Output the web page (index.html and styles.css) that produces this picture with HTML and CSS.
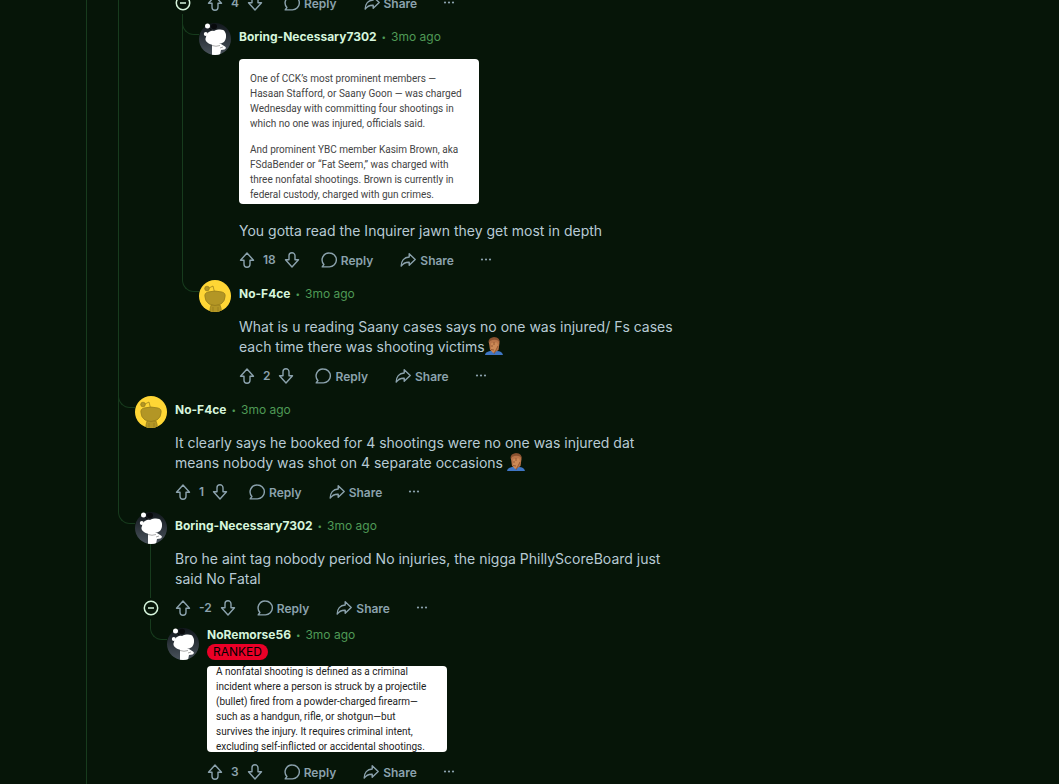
FILE: index.html
```html
<!DOCTYPE html>
<html lang="en">
<head>
<meta charset="UTF-8">
<meta name="viewport" content="width=device-width, initial-scale=1.0">
<title>Comments</title>
<link rel="stylesheet" href="styles.css">
</head>
<body>
<svg class="sprite" aria-hidden="true">
<defs>
<linearGradient id="night" x1="0" y1="0" x2="0" y2="1">
<stop offset="0" stop-color="#11171c"/>
<stop offset="1" stop-color="#4a535c"/>
</linearGradient>
<clipPath id="round"><circle cx="16" cy="16" r="16"/></clipPath>
</defs>
<symbol id="up" viewBox="0 0 16 16">
<path d="M8 1 14.500 8.200H11V12.200a3 3 0 0 1-6 0V8.200H1.500Z" fill="none" stroke="currentColor" stroke-width="1.4" stroke-linejoin="round"/>
</symbol>
<symbol id="down" viewBox="0 0 16 16">
<path d="M8 15 14.500 7.800H11V3.800a3 3 0 0 0-6 0V7.800H1.500Z" fill="none" stroke="currentColor" stroke-width="1.4" stroke-linejoin="round"/>
</symbol>
<symbol id="bubble" viewBox="0 0 16 16">
<path d="M8.400 1a6.900 6.900 0 0 1 0 13.900H1.200l1.700-2.400A6.900 6.900 0 0 1 8.400 1Z" fill="none" stroke="currentColor" stroke-width="1.4" stroke-linejoin="round"/>
</symbol>
<symbol id="share" viewBox="0 0 16 16">
<path d="M9.200 1.800 15.200 7.600 9.200 13.200V10.200C5.500 10 3 11.400 1.200 14.100 1.200 8.800 4.200 5.200 9.200 5Z" fill="none" stroke="currentColor" stroke-width="1.4" stroke-linejoin="round"/>
</symbol>
<symbol id="dots" viewBox="0 0 16 16">
<g fill="currentColor"><circle cx="4" cy="7.500" r="1.100"/><circle cx="8" cy="7.500" r="1.100"/><circle cx="12" cy="7.500" r="1.100"/></g>
</symbol>
<symbol id="collapse" viewBox="0 0 16 16">
<circle cx="8" cy="8" r="6.700" fill="none" stroke="currentColor" stroke-width="1.5"/>
<path d="M5 8h6" stroke="currentColor" stroke-width="1.5"/>
</symbol>
<symbol id="snoo-dark" viewBox="0 0 32 32">
<g clip-path="url(#round)">
<rect width="32" height="32" fill="url(#night)"/>
<path d="M9 4Q12 6 13 8" fill="none" stroke="#050505" stroke-width="1"/>
<ellipse cx="15" cy="3.500" rx="3" ry="2.800" fill="#080a0c"/>
<circle cx="6.800" cy="11" r="2" fill="#fff"/>
<path d="M7 14C8 9 12 7 15 8 19 6 25 6 26 9 28 12 27 17 25 19 20 22 12 23 9 20 6 18 6 16 7 14Z" fill="#fff"/>
<path d="M13 21h9l4 2.500q2 1.500-.5 3L22 27l-1 5h-8Z" fill="#fff"/>
<path d="M13 22.500q4 1.500 8 0M21 25l3-1" fill="none" stroke="#aaa" stroke-width="1"/>
</g>
<circle cx="8.500" cy="3" r="2.500" fill="#fff"/>
</symbol>
<symbol id="snoo-gold" viewBox="0 0 32 32">
<g clip-path="url(#round)">
<rect width="32" height="32" fill="#ffd635"/>
<g fill="#b39625" stroke="#927a1b" stroke-width=".7">
<path d="M15.500 12 14 6 10 8" fill="none"/>
<circle cx="8" cy="8.500" r="2.300"/>
<path d="M12 25h9q1.500 3 1.500 8h-12Q11 28 12 25Z"/>
<path d="M14 27v5M19 27v5" fill="none"/>
<path d="M6 17Q5 13 9 12 16 10 23 12 27 13 26 17 26 21 22 24 16 27 10 24 6 21 6 17Z"/>
</g>
</g>
</symbol>
<symbol id="facepalm" viewBox="0 0 18 18">
<path d="M0 18Q0 15 5 14h7q5 0 6 4Z" fill="#3f76c4"/>
<path d="M4 6Q4 1 9 .5 14 1 14.500 6L13.500 13 9 16 5 13Z" fill="#b97549"/>
<path d="M3.500 6Q3 .5 9 .2 15 0 14.800 6L13 3.500Q9 2 5 4Z" fill="#8a5230"/>
<path d="M6 6.500 8 5.500 12 5.500 13 8 11 13 8 16 6 13Z" fill="#cc8956"/>
<path d="M6 9h2M9 5v3M6 12.500l3 .5M13 9l-2 4-2 4" fill="none" stroke="#8a4f2c" stroke-width=".8"/>
</symbol>
</svg>

<main class="thread">
<ul class="replies">
<li class="reply">
<div class="branch"></div>
<ul class="replies">
<li class="reply">
<div class="branch last"></div>
<div>
<article class="comment">
<div class="side">
<button class="toggle" type="button" aria-label="Collapse"><svg><use href="#collapse"/></svg></button>
<span class="line"></span>
</div>
<div class="content">
<div class="actions">
<button type="button" aria-label="Upvote"><svg><use href="#up"/></svg></button>
<span class="count">4</span>
<button type="button" aria-label="Downvote"><svg><use href="#down"/></svg></button>
<button class="action reply-btn" type="button"><svg><use href="#bubble"/></svg>Reply</button>
<button class="action" type="button"><svg><use href="#share"/></svg>Share</button>
<button class="more" type="button" aria-label="More"><svg><use href="#dots"/></svg></button>
</div>
</div>
</article>
<ul class="replies">
<li class="reply">
<div class="branch"><span class="elbow"></span></div>
<article class="comment">
<div class="side"><svg class="avatar"><use href="#snoo-dark"/></svg></div>
<div class="content">
<header class="meta"><a class="author" href="#">Boring-Necessary7302</a><span class="dot">•</span><time>3mo ago</time></header>
<div class="media article-shot">
<p>One of CCK’s most prominent members —<br>Hasaan Stafford, or Saany Goon — was charged<br>Wednesday with committing four shootings in<br>which no one was injured, officials said.</p>
<p>And prominent YBC member Kasim Brown, aka<br>FSdaBender or “Fat Seem,” was charged with<br>three nonfatal shootings. Brown is currently in<br>federal custody, charged with gun crimes.</p>
</div>
<p class="text after-media">You gotta read the Inquirer jawn they get most in depth</p>
<div class="actions">
<button type="button" aria-label="Upvote"><svg><use href="#up"/></svg></button>
<span class="count">18</span>
<button type="button" aria-label="Downvote"><svg><use href="#down"/></svg></button>
<button class="action reply-btn" type="button"><svg><use href="#bubble"/></svg>Reply</button>
<button class="action" type="button"><svg><use href="#share"/></svg>Share</button>
<button class="more" type="button" aria-label="More"><svg><use href="#dots"/></svg></button>
</div>
</div>
</article>
</li>
<li class="reply">
<div class="branch last"><span class="elbow"></span></div>
<article class="comment">
<div class="side"><svg class="avatar"><use href="#snoo-gold"/></svg></div>
<div class="content">
<header class="meta"><a class="author" href="#">No-F4ce</a><span class="dot">•</span><time>3mo ago</time></header>
<p class="text">What is u reading Saany cases says no one was injured/ Fs cases each time there was shooting victims<svg class="emoji"><use href="#facepalm"/></svg></p>
<div class="actions">
<button type="button" aria-label="Upvote"><svg><use href="#up"/></svg></button>
<span class="count">2</span>
<button type="button" aria-label="Downvote"><svg><use href="#down"/></svg></button>
<button class="action reply-btn" type="button"><svg><use href="#bubble"/></svg>Reply</button>
<button class="action" type="button"><svg><use href="#share"/></svg>Share</button>
<button class="more" type="button" aria-label="More"><svg><use href="#dots"/></svg></button>
</div>
</div>
</article>
</li>
</ul>
</div>
</li>
</ul>
</li>
<li class="reply">
<div class="branch"><span class="elbow"></span></div>
<article class="comment">
<div class="side"><svg class="avatar"><use href="#snoo-gold"/></svg></div>
<div class="content">
<header class="meta"><a class="author" href="#">No-F4ce</a><span class="dot">•</span><time>3mo ago</time></header>
<p class="text">It clearly says he booked for 4 shootings were no one was injured dat means nobody was shot on 4 separate occasions <svg class="emoji"><use href="#facepalm"/></svg></p>
<div class="actions">
<button type="button" aria-label="Upvote"><svg><use href="#up"/></svg></button>
<span class="count">1</span>
<button type="button" aria-label="Downvote"><svg><use href="#down"/></svg></button>
<button class="action reply-btn" type="button"><svg><use href="#bubble"/></svg>Reply</button>
<button class="action" type="button"><svg><use href="#share"/></svg>Share</button>
<button class="more" type="button" aria-label="More"><svg><use href="#dots"/></svg></button>
</div>
</div>
</article>
</li>
<li class="reply">
<div class="branch last"><span class="elbow"></span></div>
<div>
<article class="comment">
<div class="side">
<svg class="avatar"><use href="#snoo-dark"/></svg>
<span class="line grow"></span>
<button class="toggle" type="button" aria-label="Collapse"><svg><use href="#collapse"/></svg></button>
<span class="line"></span>
</div>
<div class="content">
<header class="meta"><a class="author" href="#">Boring-Necessary7302</a><span class="dot">•</span><time>3mo ago</time></header>
<p class="text">Bro he aint tag nobody period No injuries, the nigga PhillyScoreBoard just said No Fatal</p>
<div class="actions">
<button type="button" aria-label="Upvote"><svg><use href="#up"/></svg></button>
<span class="count">-2</span>
<button type="button" aria-label="Downvote"><svg><use href="#down"/></svg></button>
<button class="action reply-btn" type="button"><svg><use href="#bubble"/></svg>Reply</button>
<button class="action" type="button"><svg><use href="#share"/></svg>Share</button>
<button class="more" type="button" aria-label="More"><svg><use href="#dots"/></svg></button>
</div>
</div>
</article>
<ul class="replies">
<li class="reply">
<div class="branch last"><span class="elbow"></span></div>
<article class="comment">
<div class="side"><svg class="avatar"><use href="#snoo-dark"/></svg></div>
<div class="content">
<header class="meta has-flair"><a class="author" href="#">NoRemorse56</a><span class="dot">•</span><time>3mo ago</time></header>
<span class="flair">RANKED</span>
<div class="media search-shot">
<p>A nonfatal shooting is defined as a criminal<br>incident where a person is struck by a projectile<br>(bullet) fired from a powder-charged firearm—<br>such as a handgun, rifle, or shotgun—but<br>survives the injury. It requires criminal intent,<br>excluding self-inflicted or accidental shootings.</p>
</div>
<div class="actions">
<button type="button" aria-label="Upvote"><svg><use href="#up"/></svg></button>
<span class="count">3</span>
<button type="button" aria-label="Downvote"><svg><use href="#down"/></svg></button>
<button class="action reply-btn" type="button"><svg><use href="#bubble"/></svg>Reply</button>
<button class="action" type="button"><svg><use href="#share"/></svg>Share</button>
<button class="more" type="button" aria-label="More"><svg><use href="#dots"/></svg></button>
</div>
</div>
</article>
</li>
</ul>
</div>
</li>
</ul>
</main>
</body>
</html>
```
FILE: styles.css
```css
* {
box-sizing: border-box;
}
html {
height: 100%;
overflow: hidden;
background-color: #061508;
}
body {
margin: 0;
height: 100%;
overflow: hidden;
background-color: #061508;
color: #b7cad4;
font-family: Inter, "Liberation Sans", sans-serif;
font-size: 14px;
line-height: 20px;
}
p, ul {
margin: 0;
padding: 0;
}
ul {
list-style: none;
}
.sprite {
display: block;
width: 0;
height: 0;
}
.thread {
max-width: 594px;
margin: -13px 0 0 86px;
padding-left: 16px;
border-left: 1px solid #173b1d;
min-height: calc(100% + 13px);
}

/* nesting lines */
.replies {
margin-left: 15px;
}
.reply {
display: grid;
grid-template-columns: 17px minmax(0, 1fr);
}
.branch {
border-left: 1px solid #173b1d;
}
.branch.last {
border-left-color: transparent;
}
.elbow {
display: block;
height: 12px;
margin-left: -1px;
border: solid #173b1d;
border-width: 0 0 1px 1px;
border-bottom-left-radius: 12px;
}
.line {
width: 1px;
height: 9px;
margin-right: 1px;
background-color: #173b1d;
}
.line.grow {
flex: 1;
}

.comment {
display: grid;
grid-template-columns: 32px minmax(0, 1fr);
column-gap: 8px;
}
.side {
display: flex;
flex-direction: column;
align-items: center;
justify-content: flex-end;
}
.side:has(.avatar:only-child) {
justify-content: flex-start;
}
.avatar {
display: block;
width: 32px;
height: 32px;
}
.content {
padding-bottom: 4px;
}
.meta {
display: flex;
align-items: center;
height: 28px;
font-size: 12px;
}
.meta.has-flair {
height: 14px;
}
.author {
color: #d6f5dc;
font-weight: 700;
text-decoration: none;
}
.dot {
margin: 0 5px;
color: #4f9a56;
font-size: 8px;
}
time {
color: #4f9a56;
}
.flair {
display: block;
width: fit-content;
margin-top: 2px;
padding: 0 6px;
border-radius: 8px;
background-color: #ea0027;
color: #000;
font-size: 12px;
line-height: 16px;
}
.text {
margin: 9px 0 3px;
}
.text.after-media {
margin-top: 17px;
}
.emoji {
width: 18px;
height: 18px;
vertical-align: -3px;
}

/* attached pictures */
.media {
width: 240px;
max-width: 100%;
border-radius: 4px;
background-color: #fff;
overflow: hidden;
font-family: Roboto, "Liberation Sans", sans-serif;
font-size: 10px;
line-height: 15px;
white-space: nowrap;
}
.article-shot {
height: 145px;
margin-top: 8px;
padding: 12px 11px 0;
color: #444;
}
.article-shot p + p {
margin-top: 11px;
}
.search-shot {
display: flex;
align-items: center;
height: 86px;
margin: 6px 0 4px;
padding-left: 9px;
color: #222;
}

/* vote / reply / share */
button {
display: flex;
align-items: center;
padding: 0;
border: 0;
background: none;
color: #8ba2ad;
font-family: inherit;
font-size: 12px;
font-weight: 600;
cursor: pointer;
}
button svg {
display: block;
width: 16px;
height: 16px;
}
.actions {
display: flex;
align-items: center;
height: 32px;
color: #8ba2ad;
font-size: 12px;
}
.count {
margin: 0 8px;
font-weight: 600;
}
.action {
gap: 4px;
margin-right: 24px;
}
.reply-btn {
margin-left: 21px;
margin-right: 27px;
}
.toggle {
padding: 2px 0;
margin-bottom: 1px;
color: #d6f5dc;
}
```
